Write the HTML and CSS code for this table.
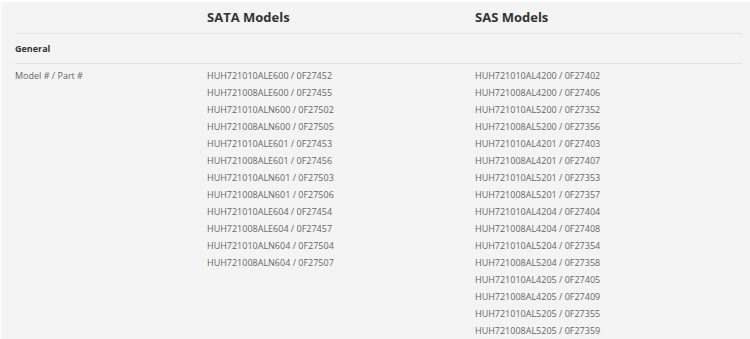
FILE: index.html
```html
<!DOCTYPE html>
<html lang="en">
<head>
    <meta charset="UTF-8">
    <meta name="viewport" content="width=device-width, initial-scale=1.0">
    <title>Ultrastar He10 Models</title>
    <link rel="stylesheet" href="styles.css">
</head>
<body>
    <div class="specs">
        <div class="spec-row head-row">
            <div class="cell"></div>
            <div class="cell col-title">SATA Models</div>
            <div class="cell col-title">SAS Models</div>
        </div>

        <div class="spec-row group-row">
            <div class="cell group-title">General</div>
            <div class="cell"></div>
            <div class="cell"></div>
        </div>

        <div class="spec-row data-row">
            <div class="cell label">Model # / Part #</div>
            <ul class="cell models">
                <li>HUH721010ALE600 / 0F27452</li>
                <li>HUH721008ALE600 / 0F27455</li>
                <li>HUH721010ALN600 / 0F27502</li>
                <li>HUH721008ALN600 / 0F27505</li>
                <li>HUH721010ALE601 / 0F27453</li>
                <li>HUH721008ALE601 / 0F27456</li>
                <li>HUH721010ALN601 / 0F27503</li>
                <li>HUH721008ALN601 / 0F27506</li>
                <li>HUH721010ALE604 / 0F27454</li>
                <li>HUH721008ALE604 / 0F27457</li>
                <li>HUH721010ALN604 / 0F27504</li>
                <li>HUH721008ALN604 / 0F27507</li>
            </ul>
            <ul class="cell models">
                <li>HUH721010AL4200 / 0F27402</li>
                <li>HUH721008AL4200 / 0F27406</li>
                <li>HUH721010AL5200 / 0F27352</li>
                <li>HUH721008AL5200 / 0F27356</li>
                <li>HUH721010AL4201 / 0F27403</li>
                <li>HUH721008AL4201 / 0F27407</li>
                <li>HUH721010AL5201 / 0F27353</li>
                <li>HUH721008AL5201 / 0F27357</li>
                <li>HUH721010AL4204 / 0F27404</li>
                <li>HUH721008AL4204 / 0F27408</li>
                <li>HUH721010AL5204 / 0F27354</li>
                <li>HUH721008AL5204 / 0F27358</li>
                <li>HUH721010AL4205 / 0F27405</li>
                <li>HUH721008AL4205 / 0F27409</li>
                <li>HUH721010AL5205 / 0F27355</li>
                <li>HUH721008AL5205 / 0F27359</li>
            </ul>
        </div>
    </div>
</body>
</html>
```

FILE: styles.css
```css
body {
    margin: 0;
    font-family: 'Open Sans', 'Liberation Sans', sans-serif;
    background-color: #f4f4f4;
    color: #666;
    border-top: 2px solid #fff;
    border-left: 2px solid #fbfbfb;
}
.specs {
    padding: 0 8px 0 13px;
}
.spec-row {
    display: grid;
    grid-template-columns: 192px 268px 1fr;
    border-bottom: 1px solid #e3e3e3;
}
.cell {
    margin: 0;
    padding: 0;
}
.head-row {
    height: 31px;
    align-items: end;
}
.col-title {
    font-size: 13px;
    font-weight: 700;
    color: #333;
    line-height: 20px;
    padding-bottom: 6px;
}
.group-row {
    height: 29px;
    align-items: center;
}
.group-title {
    font-size: 9px;
    font-weight: 700;
    color: #333;
}
.data-row {
    border-bottom: none;
    padding-top: 3px;
}
.label,
.models li {
    font-size: 9px;
    line-height: 17px;
}
.models {
    list-style: none;
}
```
